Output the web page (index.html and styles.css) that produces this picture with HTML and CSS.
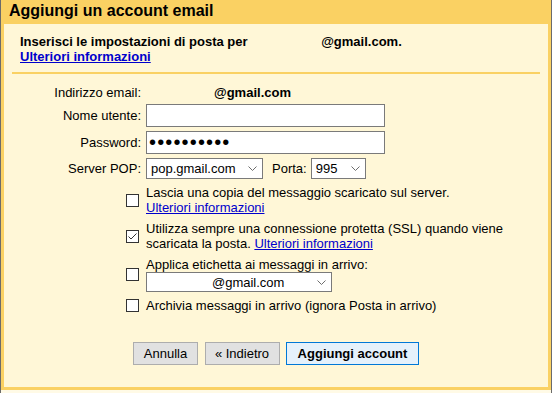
FILE: index.html
```html
<!DOCTYPE html>
<html lang="it">
<head>
<meta charset="utf-8">
<title>Aggiungi un account email</title>
<link rel="stylesheet" href="styles.css">
</head>
<body>
<div class="window">
  <div class="title">Aggiungi un account email</div>
  <div class="panel">
    <div class="intro">
      <div class="intro-text">Inserisci le impostazioni di posta per <span class="blank blank-intro"></span>@gmail.com.</div>
      <a class="link bold" href="#">Ulteriori informazioni</a>
    </div>
    <div class="sep"></div>
    <div class="form">
      <div class="label">Indirizzo email:</div>
      <div class="value bold"><span class="blank blank-addr"></span>@gmail.com</div>

      <div class="label">Nome utente:</div>
      <div class="field"></div>

      <div class="label">Password:</div>
      <div class="field pass">••••••••••</div>

      <div class="label">Server POP:</div>
      <div class="server-row">
        <div class="select sel-server"><span>pop.gmail.com</span><svg class="chev" width="9" height="5" viewBox="0 0 9 5"><path d="M0.5 0.5 L4.5 4.5 L8.5 0.5" fill="none" stroke="#6d6d6d" stroke-width="1"/></svg></div>
        <span class="porta">Porta:</span>
        <div class="select sel-port"><span>995</span><svg class="chev" width="9" height="5" viewBox="0 0 9 5"><path d="M0.5 0.5 L4.5 4.5 L8.5 0.5" fill="none" stroke="#6d6d6d" stroke-width="1"/></svg></div>
      </div>

      <div class="check check-a"><svg width="13" height="13" viewBox="0 0 13 13"><rect x="0.5" y="0.5" width="12" height="12" fill="#fff" stroke="#333"/></svg></div>
      <div class="ctext check-a">Lascia una copia del messaggio scaricato sul server.<br><a class="link" href="#">Ulteriori informazioni</a></div>

      <div class="check check-b"><svg width="13" height="13" viewBox="0 0 13 13"><rect x="0.5" y="0.5" width="12" height="12" fill="#fff" stroke="#333"/><path d="M2.5 6.5 L5 9 L10.5 3.5" fill="none" stroke="#333" stroke-width="1"/></svg></div>
      <div class="ctext check-b">Utilizza sempre una connessione protetta (SSL) quando viene scaricata la posta. <a class="link" href="#">Ulteriori informazioni</a></div>

      <div class="check check-c"><svg width="13" height="13" viewBox="0 0 13 13"><rect x="0.5" y="0.5" width="12" height="12" fill="#fff" stroke="#333"/></svg></div>
      <div class="ctext check-c">
        <div>Applica etichetta ai messaggi in arrivo:</div>
        <div class="select sel-label"><span><span class="blank blank-label"></span>@gmail.com</span><svg class="chev" width="9" height="5" viewBox="0 0 9 5"><path d="M0.5 0.5 L4.5 4.5 L8.5 0.5" fill="none" stroke="#6d6d6d" stroke-width="1"/></svg></div>
      </div>

      <div class="check check-d"><svg width="13" height="13" viewBox="0 0 13 13"><rect x="0.5" y="0.5" width="12" height="12" fill="#fff" stroke="#333"/></svg></div>
      <div class="ctext check-d">Archivia messaggi in arrivo (ignora Posta in arrivo)</div>
    </div>
    <div class="buttons">
      <button class="btn btn-cancel">Annulla</button>
      <button class="btn btn-back">« Indietro</button>
      <button class="btn btn-primary">Aggiungi account</button>
    </div>
  </div>
</div>
</body>
</html>
```
FILE: styles.css
```css
html, body {
  margin: 0;
  padding: 0;
}
body {
  background: #fffae6;
  font-family: "Liberation Sans", Arial, sans-serif;
  font-size: 13px;
  line-height: 15px;
  color: #000;
}
.window {
  width: 552px;
  height: 393px;
  box-sizing: border-box;
  border-left: 1px solid #6b6b6b;
  border-right: 1px solid #6b6b6b;
  display: flex;
  flex-direction: column;
}
.title {
  height: 24px;
  box-sizing: border-box;
  background: #fad163;
  font-size: 16px;
  font-weight: bold;
  line-height: 22px;
  padding-left: 8px;
}
.panel {
  height: 366px;
  box-sizing: border-box;
  background: #fff7d7;
  border: 3px solid #fad163;
  border-top: none;
}
.bold { font-weight: bold; }
.intro {
  padding: 10px 0 0 16px;
}
.intro-text { font-weight: bold; }
.blank { display: inline-block; }
.blank-intro { width: 70px; }
.blank-addr { width: 68px; }
.blank-label { width: 61px; }
.link {
  color: #0000cc;
  text-decoration: underline;
}
.sep {
  height: 2px;
  background: #fad163;
  margin: 8px 8px 0 8px;
}
.form {
  display: grid;
  grid-template-columns: 137px 370px;
  column-gap: 5px;
  row-gap: 4px;
  align-items: center;
  margin-top: 11px;
}
.label {
  text-align: right;
}
.field {
  width: 239px;
  height: 23px;
  box-sizing: border-box;
  border: 1px solid #7a7a7a;
  background: #fff;
}
.pass {
  display: flex;
  align-items: center;
  font-size: 20px;
  letter-spacing: 1.15px;
  padding-left: 2px;
  line-height: 21px;
}
.server-row {
  display: flex;
  align-items: center;
}
.select {
  height: 21px;
  box-sizing: border-box;
  border: 1px solid #7a7a7a;
  background: #fff;
  display: flex;
  align-items: center;
  justify-content: space-between;
  padding: 0 5px 0 4px;
}
.sel-server { width: 117px; }
.sel-port { width: 55px; }
.sel-label { width: 186px; height: 20px; padding-right: 5px; }
.porta {
  margin: 0 4px 0 9px;
}
.check {
  justify-self: end;
  margin-right: 2px;
  height: 13px;
}
.check svg { display: block; }
.check-a, .check-b, .check-c, .check-d { margin-top: 2px; }
.buttons {
  display: flex;
  justify-content: center;
  gap: 6.5px;
  margin-top: 29px;
}
.btn {
  height: 23px;
  box-sizing: border-box;
  border: 1px solid #adadad;
  background: #e1e1e1;
  font-family: "Liberation Sans", Arial, sans-serif;
  font-size: 13px;
  color: #000;
  padding: 0;
  margin: 0;
}
.btn-cancel { width: 65px; }
.btn-back { width: 75px; }
.btn-primary {
  width: 133px;
  border-color: #0078d7;
  background: #e5f1fb;
  font-weight: bold;
}
```
